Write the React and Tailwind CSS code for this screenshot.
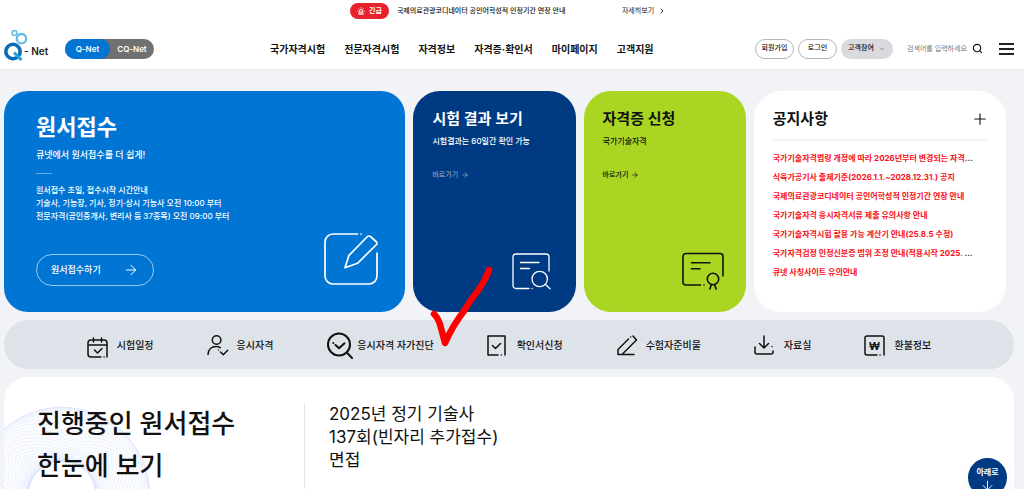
import { useState } from "react";
import { ArrowDown, ArrowRight, ChevronDown, ChevronRight, Plus, Search, Siren } from "lucide-react";

const menus = ["국가자격시험", "전문자격시험", "자격정보", "자격증·확인서", "마이페이지", "고객지원"];

const notices = [
  { text: "국가기술자격법령 개정에 따라 2026년부터 변경되는 자격", more: true },
  { text: "식육가공기사 출제기준(2026.1.1.~2028.12.31.) 공지" },
  { text: "국제의료관광코디네이터 공인어학성적 인정기간 연장 안내" },
  { text: "국가기술자격 응시자격서류 제출 유의사항 안내" },
  { text: "국가기술자격시험 활용 가능 계산기 안내(25.8.5 수정)" },
  { text: "국가자격검정 인정신분증 범위 조정 안내(적용시작 2025. ", more: true },
  { text: "큐넷 사칭사이트 유의안내" },
];

function QuickIcon({ name }) {
  const props = {
    fill: "none",
    stroke: "currentColor",
    strokeWidth: 1.5,
    strokeLinecap: "round",
    strokeLinejoin: "round",
    "aria-hidden": true,
  };

  if (name === "diagnosis") {
    return (
      <svg viewBox="0 0 27 28" className="h-7 w-[27px] shrink-0" {...props} strokeWidth="2">
        <circle cx="13" cy="13.5" r="11" />
        <path d="M20.8 21.5 26 27M9.5 14l3.5 3.3 5.5-5M7.3 12v.1" />
      </svg>
    );
  }

  return (
    <svg viewBox="0 0 22 28" className="h-7 w-[22px] shrink-0" {...props}>
      {name === "calendar" && (
        <path d="M14 26H4a3 3 0 0 1-3-3V12a3 3 0 0 1 3-3h13a3 3 0 0 1 3 3v14M17 26h.1M1 14h19M6.5 7v4M14.5 7v4M7.5 19l3 3 4.5-4.5" />
      )}
      {name === "user" && (
        <>
          <circle cx="9.6" cy="9" r="4.3" />
          <path d="M1 23.5c.3-5 3.7-8 8-8 1.700 0 3 .4 4.3 1.2M13.5 21l2.8 2.7 4.4-4.5M11.500 19v.1" />
        </>
      )}
      {name === "document" && <path d="M11 24H1V5h17v19M14.3 24h.1M5.5 14.5l3 3 5-5" />}
      {name === "pencil" && <path d="M18 23.5H2v-5L12.5 8M14.8 6v.1M17 5l3.5 4L7 22.5" />}
      {name === "download" && (
        <path d="M1 16v5a2 2 0 0 0 2 2h14a2 2 0 0 0 2-2v-1M18 15.5v.1M10 5v12M5.5 12.5l4.5 4.5 4.5-4.5" />
      )}
      {name === "won" && (
        <>
          <path d="M13 24H3a2 2 0 0 1-2-2V7a2 2 0 0 1 2-2h15a2 2 0 0 1 2 2v17M16 24h.1" />
          <text x="10.5" y="18.5" textAnchor="middle" fontSize="11" fontWeight="700" fill="currentColor" stroke="none">₩</text>
        </>
      )}
    </svg>
  );
}

const quickLinks = [
  { label: "시험일정", icon: "calendar" },
  { label: "응시자격", icon: "user" },
  { label: "응시자격 자가진단", icon: "diagnosis" },
  { label: "확인서신청", icon: "document" },
  { label: "수험자준비물", icon: "pencil" },
  { label: "자료실", icon: "download" },
  { label: "환불정보", icon: "won" },
];

function Logo() {
  return (
    <a href="#" aria-label="Q-Net" className="flex items-center text-[#222]">
      <svg viewBox="0 0 20 37" className="h-[37px] w-5 overflow-visible" fill="none" aria-hidden="true">
        <circle cx="10.5" cy="3" r="2.4" stroke="#62bde6" strokeWidth="1.5" />
        <circle cx="17.5" cy="8.7" r="4.7" stroke="#62bde6" strokeWidth="2.3" />
        <circle cx="9" cy="21.5" r="7.2" stroke="#0a6bb8" strokeWidth="3.6" />
        <path d="M10 22.5l7.5 7.5" stroke="#22a5dc" strokeWidth="3" />
      </svg>
      <span className="pt-1 text-[10px] leading-4 font-semibold">- Net</span>
    </a>
  );
}

function Header() {
  const [site, setSite] = useState("Q-Net");

  return (
    <header className="border-b border-[#ececee] bg-white">
      {/* Urgent notice */}
      <div className="flex h-7 items-start justify-center pt-[3px] pr-2">
        <span className="flex h-4 w-[39px] items-center justify-center gap-1 rounded-full bg-[#e8222c] text-[7px] font-bold text-white">
          <Siren size={8} strokeWidth={2.5} />
          긴급
        </span>
        <a href="#" className="ml-2 w-[177px] text-[7px] leading-4 font-medium">국제의료관광코디네이터 공인어학성적 인정기간 연장 안내</a>
        <a href="#" className="ml-12 flex items-center gap-1 text-[7px] leading-4">
          자세히보기
          <ChevronRight size={8} strokeWidth={2.5} />
        </a>
      </div>

      <div className="flex h-[41px] items-center pr-2.5 pl-1">
        <div className="flex w-[266px] items-center gap-[17px]">
          <Logo />
          <div className="flex h-5 w-[89px] rounded-full bg-[#707070] text-[8px] font-semibold text-white">
            {["Q-Net", "CQ-Net"].map((name) => (
              <button
                key={name}
                onClick={() => setSite(name)}
                className={`flex-1 rounded-full ${site === name ? "bg-[#0075d4]" : ""}`}
              >
                {name}
              </button>
            ))}
          </div>
        </div>

        <nav className="flex gap-[19px] text-[10px] leading-4 font-bold whitespace-nowrap">
          {menus.map((menu) => (
            <a key={menu} href="#">{menu}</a>
          ))}
        </nav>

        <div className="ml-auto flex items-center text-[7px] font-medium">
          <button className="h-5 w-[39px] rounded-full border border-[#b5b5b5]">회원가입</button>
          <button className="ml-1 h-5 w-[39px] rounded-full border border-[#b5b5b5]">로그인</button>
          <button aria-haspopup="menu" className="ml-1 flex h-5 w-[52px] items-center justify-center gap-1 rounded-full bg-[#d9dade]">
            고객참여
            <ChevronDown size={8} className="text-[#777]" />
          </button>
          <input
            type="text"
            aria-label="검색어"
            placeholder="검색어를 입력하세요"
            className="ml-3.5 h-5 w-[65px] bg-transparent font-normal outline-none placeholder:text-[#777]"
          />
          <button aria-label="검색">
            <Search size={11} strokeWidth={2.5} />
          </button>
          <button aria-label="전체메뉴" className="ml-4 flex w-[15px] flex-col gap-[3px]">
            <span className="h-[2px] w-full bg-[#222]" />
            <span className="h-[2px] w-full bg-[#222]" />
            <span className="h-[2px] w-full bg-[#222]" />
          </button>
        </div>
      </div>
    </header>
  );
}

function ShortcutCard({ title, desc, className, linkClassName, children }) {
  return (
    <section className={`flex flex-col rounded-[27px] pt-[18px] pr-[25px] pb-[22px] pl-[19px] whitespace-nowrap ${className}`}>
      <h2 className="text-[15px] leading-5 font-semibold">{title}</h2>
      <p className="mt-1.5 text-[8px] leading-3 font-medium">{desc}</p>
      <a href="#" className={`mt-[23px] flex items-center gap-[3px] text-[7px] leading-[10px] ${linkClassName}`}>
        바로가기
        <ArrowRight size={8} />
      </a>
      <div className="mt-auto self-end">{children}</div>
    </section>
  );
}

function Swirl() {
  const rings = Array.from({ length: 48 }, (_, i) => (i * Math.PI * 2) / 48);
  return (
    <svg viewBox="0 0 180 180" className="absolute top-7 -left-8 size-[180px]" fill="none" aria-hidden="true">
      {rings.map((angle) => (
        <circle
          key={angle}
          cx={90 + Math.cos(angle) * 27}
          cy={90 + Math.sin(angle) * 27}
          r="61"
          stroke="#b9c8f7"
          strokeWidth="0.6"
          opacity="0.3"
        />
      ))}
    </svg>
  );
}

export default function App() {
  return (
    <div className="relative flex h-screen flex-col overflow-hidden bg-[#f1f3f7] font-['Inter','Noto_Sans_CJK_KR',sans-serif] text-[#111]">
      <Header />

      <main className="flex flex-1 flex-col gap-2 pt-[21px] pr-2.5 pl-1">
        <div className="relative grid min-h-[221px] grid-cols-[401fr_162fr_162fr_252fr] gap-2 pr-2">
          {/* Application */}
          <section className="flex justify-between rounded-[24px] bg-[#0075d4] pt-[22px] pr-[26px] pb-[26px] pl-8 text-white">
            <div className="flex flex-col items-start whitespace-nowrap">
              <h2 className="text-[22px] leading-7 font-semibold">원서접수</h2>
              <p className="mt-[7px] text-[9px] leading-[14px] font-medium">큐넷에서 원서접수를 더 쉽게!</p>
              <hr className="mt-[11px] w-4 border-white/40" />
              <p className="mt-2.5 text-[8px] leading-[13px] font-medium">
                원서접수 초일, 접수시작 시간안내
                <br />
                기술사, 기능장, 기사, 정기·상시 기능사 오전 10:00 부터
                <br />
                전문자격(공인중개사, 변리사 등 37종목) 오전 09:00 부터
              </p>
              <button className="mt-auto flex h-8 w-[118px] items-center justify-between rounded-full border border-white/60 px-3.5 text-[9px] font-medium">
                원서접수하기
                <ArrowRight size={16} strokeWidth={1.5} />
              </button>
            </div>
            <svg viewBox="0 0 56 54" className="h-[54px] w-14 self-end" fill="none" stroke="currentColor" strokeWidth="1.7" strokeLinecap="round" strokeLinejoin="round" aria-hidden="true">
              <path d="M34.5 2H10a8 8 0 0 0-8 8v34a8 8 0 0 0 8 8h36a8 8 0 0 0 8-8V21M38 2h.1" />
              <path d="M22 35.7l4-12.4L44.5 4.5q1.5-1 3 0l6 5.5q1 1.2 0 2.5L34.5 31.3z" />
            </svg>
          </section>

          <ShortcutCard title="시험 결과 보기" desc="시험결과는 60일간 확인 가능" className="bg-[#003a82] text-white" linkClassName="text-white/60">
            <svg viewBox="0 0 39 37" className="h-[37px] w-[39px]" fill="none" stroke="currentColor" strokeWidth="1.3" strokeLinecap="round" aria-hidden="true">
              <path d="M17 35.500H4a3 3 0 0 1-3-3V4a3 3 0 0 1 3-3h30a3 3 0 0 1 3 3v14M20 35.5h.1M8.500 9.5h18.5M8.500 15.5h9" />
              <circle cx="27.7" cy="26" r="7.7" />
              <path d="M33.5 31.5l4.5 4.2" />
            </svg>
          </ShortcutCard>

          <ShortcutCard title="자격증 신청" desc="국가기술자격" className="bg-[#aad522] text-[#111]" linkClassName="font-medium">
            <svg viewBox="0 0 43 38" className="-mr-1 h-[38px] w-[43px]" fill="none" stroke="currentColor" strokeWidth="1.6" strokeLinecap="round" aria-hidden="true">
              <path d="M18.5 33H4a3 3 0 0 1-3-3V4.5a3 3 0 0 1 3-3h34a3 3 0 0 1 3 3V24M22 33h.1M9.5 10.7h18.5M9.5 16.7h8.5" />
              <circle cx="31" cy="27" r="5.7" />
              <path d="M29.3 33l-1.5 4M32.7 33l1.5 4" />
            </svg>
          </ShortcutCard>

          {/* Notices */}
          <section className="min-w-0 rounded-[27px] bg-white px-[19px] pt-[18px]">
            <div className="flex items-center justify-between border-b-2 border-[#f5f5f5] pb-2.5">
              <h2 className="text-[15px] leading-5 font-semibold">공지사항</h2>
              <button aria-label="공지사항 더보기" className="-mr-0.5">
                <Plus size={18} strokeWidth={1.5} />
              </button>
            </div>
            <ul className="mt-2 text-[8px] leading-[19px] font-bold whitespace-nowrap">
              {notices.map(({ text, more }) => (
                <li key={text}>
                  <a href="#" className="text-[#fb1018]">{text}</a>
                  {more && "..."}
                </li>
              ))}
            </ul>
          </section>

          {/* Hand-drawn tick */}
          <svg viewBox="0 0 64 90" className="pointer-events-none absolute top-[174px] left-[426px] h-[90px] w-16" fill="none" stroke="#ff0000" strokeWidth="6.5" strokeLinecap="round" strokeLinejoin="round" aria-hidden="true">
            <path d="M4 49q5 5 7 14l4 15q8-18 19-32 7-12 13-19 8-11 12-22" />
          </svg>
        </div>

        <nav className="flex h-[49px] shrink-0 items-center justify-center gap-[53px] rounded-full bg-[#dee2e9] text-[10px] leading-4 font-medium whitespace-nowrap">
          {quickLinks.map(({ label, icon }) => (
            <a key={label} href="#" className={`flex items-center ${icon === "diagnosis" ? "gap-1" : "gap-2"}`}>
              <QuickIcon name={icon} />
              {label}
            </a>
          ))}
        </nav>

        {/* Open applications */}
        <section className="relative flex flex-1 overflow-hidden rounded-t-[24px] bg-white pt-[26px] pl-[33px]">
          <Swirl />
          <h2 className="relative w-[268px] border-r border-[#e8e8e8] text-[26px] leading-[42px] font-medium">
            진행중인 원서접수
            <br />
            한눈에 보기
          </h2>
          <h3 className="pl-6 text-[17px] leading-[23px]">
            2025년 정기 기술사
            <br />
            137회(빈자리 추가접수)
            <br />
            면접
          </h3>
        </section>
      </main>

      <button className="absolute right-[17px] -bottom-2 flex size-[39px] flex-col items-center rounded-full bg-[#003a82] pt-2 text-[8px] leading-3 font-bold text-white shadow-lg">
        아래로
        <ArrowDown size={15} strokeWidth={1.5} />
      </button>
    </div>
  );
}
